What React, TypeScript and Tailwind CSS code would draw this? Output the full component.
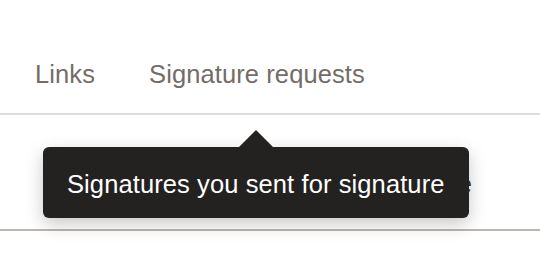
export default function App() {
  return (
    <div className="relative w-[540px] h-[262px] bg-white overflow-hidden font-['Liberation_Sans',Arial,sans-serif]">
      {/* tabs */}
      <div className="flex items-start gap-[54px] pl-[35px] pt-[59px] pb-[24px] border-b-2 border-[#dddddd]">
        <span className="text-[25.5px] leading-[30px] tracking-[0.1px] text-[#736d67]">Links</span>
        <span className="text-[25.5px] leading-[30px] tracking-[0.1px] text-[#736d67]">Signature requests</span>
      </div>

      {/* row under the tooltip */}
      <div className="flex justify-end pr-[68px] pt-[54px] pb-[30px] border-b-2 border-[#bcb6ae]">
        <span className="text-[25.5px] leading-[30px] text-[#3a3733] whitespace-nowrap">signature</span>
      </div>

      {/* tooltip */}
      <div className="absolute left-[43px] top-[147px] w-[426px] h-[71px] rounded-[6px] bg-[#242220] shadow-[0_6px_18px_rgba(0,0,0,0.22)] flex items-center px-[24px]">
        <div className="absolute left-[201px] top-[-12px] w-[24px] h-[24px] rotate-45 bg-[#242220]" />
        <span className="relative text-[25.5px] leading-[30px] pt-[2px] tracking-[0.1px] text-white whitespace-nowrap">Signatures you sent for signature</span>
      </div>
    </div>
  );
}
